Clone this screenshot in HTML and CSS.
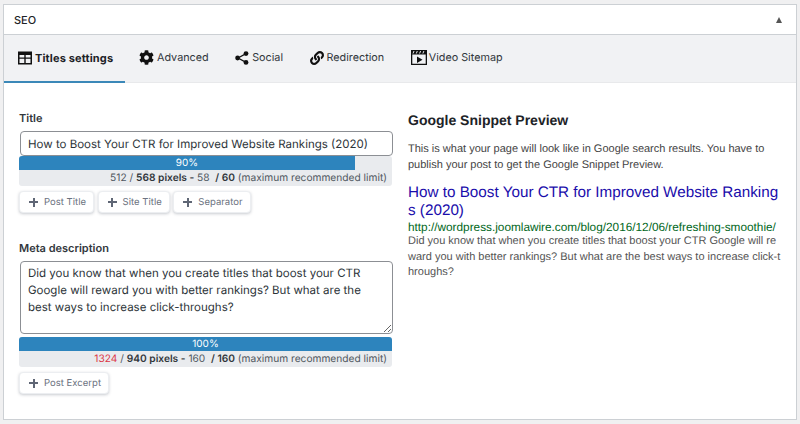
FILE: index.html
```html
<!DOCTYPE html>
<html lang="en">
<head>
<meta charset="utf-8">
<title>SEO</title>
<link rel="stylesheet" href="styles.css">
</head>
<body>
<section class="panel">
  <header class="panel-head">
    <h2 class="panel-title">SEO</h2>
    <span class="caret"></span>
  </header>
  <nav class="tabs">
    <a class="tab tab-active">
      <svg class="icon" viewBox="0 0 14 13"><path fill-rule="evenodd" d="M0 0h14v13H0zM1.500 3.500v2.500h4.800V3.500zM7.700 3.500v2.500h4.800V3.500zM1.500 7.300v4.200h4.800V7.300zM7.700 7.300v4.200h4.800V7.300z"/></svg>
      Titles settings
    </a>
    <a class="tab">
      <svg class="icon icon-gear" viewBox="0 0 512 512"><path d="M487.400 315.700l-42.600-24.600c4.300-23.200 4.300-47 0-70.200l42.600-24.600c4.900-2.800 7.100-8.600 5.500-14-11.100-35.600-30-67.800-54.700-94.600-3.800-4.100-10-5.100-14.800-2.300L380.800 110c-17.900-15.400-38.500-27.300-60.800-35.100V25.800c0-5.600-3.900-10.500-9.400-11.700-36.700-8.200-74.300-7.800-109.200 0-5.500 1.200-9.400 6.100-9.400 11.700V75c-22.200 7.900-42.800 19.800-60.800 35.100L88.700 85.500c-4.900-2.800-11-1.900-14.800 2.300-24.700 26.700-43.600 58.900-54.700 94.600-1.700 5.400.6 11.200 5.500 14L67.300 221c-4.300 23.200-4.300 47 0 70.200l-42.600 24.600c-4.900 2.800-7.100 8.600-5.500 14 11.100 35.600 30 67.800 54.700 94.600 3.800 4.100 10 5.100 14.800 2.300l42.600-24.600c17.900 15.400 38.500 27.300 60.800 35.100v49.200c0 5.600 3.900 10.500 9.400 11.700 36.700 8.200 74.300 7.800 109.200 0 5.500-1.200 9.400-6.100 9.400-11.700v-49.200c22.200-7.900 42.800-19.800 60.800-35.100l42.600 24.600c4.900 2.800 11 1.900 14.800-2.300 24.700-26.700 43.600-58.900 54.700-94.600 1.500-5.500-.7-11.300-5.600-14.100zM256 336c-44.100 0-80-35.900-80-80s35.900-80 80-80 80 35.900 80 80-35.900 80-80 80z"/></svg>
      Advanced
    </a>
    <a class="tab">
      <svg class="icon" viewBox="0 0 14 14"><circle cx="11" cy="2.600" r="2.400"/><circle cx="11" cy="11.400" r="2.400"/><circle cx="2.600" cy="7" r="2.400"/><path d="M3 7l8-4.400M3 7l8 4.400" stroke="#111" stroke-width="1.200" fill="none"/></svg>
      Social
    </a>
    <a class="tab">
      <svg class="icon" viewBox="0 0 512 512"><path d="M326.612 185.391c59.747 59.809 58.927 155.698.36 214.590-.11.12-.24.25-.36.37l-67.200 67.200c-59.270 59.270-155.699 59.262-214.960 0-59.270-59.260-59.270-155.700 0-214.960l37.106-37.106c9.840-9.840 26.786-3.300 27.294 10.606.648 17.722 3.826 35.527 9.690 52.721 1.986 5.822.567 12.262-3.783 16.612l-13.087 13.087c-28.026 28.026-28.905 73.660-1.155 101.960 28.024 28.579 74.086 28.749 102.325.51l67.200-67.190c28.191-28.191 28.073-73.757 0-101.830-3.701-3.694-7.429-6.564-10.341-8.569a16.037 16.037 0 0 1-6.947-12.606c-.396-10.567 3.348-21.456 11.698-29.806l21.054-21.055c5.521-5.521 14.182-6.199 20.584-1.731a152.482 152.482 0 0 1 20.522 17.197zM467.547 44.449c-59.261-59.262-155.690-59.270-214.960 0l-67.200 67.200c-.12.12-.25.25-.36.37-58.566 58.892-59.387 154.781.36 214.590a152.454 152.454 0 0 0 20.521 17.196c6.402 4.468 15.064 3.789 20.584-1.731l21.054-21.055c8.350-8.350 12.094-19.239 11.698-29.806a16.037 16.037 0 0 0-6.947-12.606c-2.912-2.005-6.640-4.875-10.341-8.569-28.073-28.073-28.191-73.639 0-101.830l67.200-67.190c28.239-28.239 74.300-28.069 102.325.51 27.750 28.300 26.872 73.934-1.155 101.960l-13.087 13.087c-4.350 4.350-5.769 10.790-3.783 16.612 5.864 17.194 9.042 34.999 9.690 52.721.509 13.906 17.454 20.446 27.294 10.606l37.106-37.106c59.271-59.259 59.271-155.699.001-214.959z"/></svg>
      Redirection
    </a>
    <a class="tab">
      <svg class="icon icon-video" viewBox="0 0 16 15"><path fill-rule="evenodd" d="M0 0h16v15H0zM1.300 4.500v9.200h13.400V4.500z"/><path d="M6 6.500l5.500 3.200L6 12.900z"/><path d="M3 1l-1 2.500M6.300 1l-1 2.500M9.600 1l-1 2.500M12.900 1l-1 2.500" stroke="#fff" stroke-width=".9"/></svg>
      Video Sitemap
    </a>
  </nav>
  <div class="panel-body">
    <div class="col-form">
      <label class="field-label">Title</label>
      <input class="text-input" type="text" value="How to Boost Your CTR for Improved Website Rankings (2020)">
      <div class="meter"><div class="meter-fill fill-90">90%</div></div>
      <div class="counter">512 / <b>568 pixels -</b> 58 &nbsp;<b>/ 60</b> (maximum recommended limit)</div>
      <div class="tags">
        <button class="tag" type="button"><span class="plus"></span>Post Title</button>
        <button class="tag" type="button"><span class="plus"></span>Site Title</button>
        <button class="tag" type="button"><span class="plus"></span>Separator</button>
      </div>
      <label class="field-label label-meta">Meta description</label>
      <textarea class="text-area">Did you know that when you create titles that boost your CTR Google will reward you with better rankings? But what are the best ways to increase click-throughs?</textarea>
      <div class="meter"><div class="meter-fill fill-100">100%</div></div>
      <div class="counter"><span class="over">1324</span> / <b>940 pixels -</b> 160 &nbsp;<b>/ 160</b> (maximum recommended limit)</div>
      <div class="tags">
        <button class="tag" type="button"><span class="plus"></span>Post Excerpt</button>
      </div>
    </div>
    <div class="col-preview">
      <h3 class="preview-title">Google Snippet Preview</h3>
      <p class="preview-note">This is what your page will look like in Google search results. You have to publish your post to get the Google Snippet Preview.</p>
      <a class="serp-title">How to Boost Your CTR for Improved Website Rankings (2020)</a>
      <div class="serp-url">http://wordpress.joomlawire.com/blog/2016/12/06/refreshing-smoothie/</div>
      <p class="serp-desc">Did you know that when you create titles that boost your CTR Google will reward you with better rankings? But what are the best ways to increase click-throughs?</p>
    </div>
  </div>
</section>
</body>
</html>
```
FILE: styles.css
```css
* { box-sizing: border-box; }
html, body { margin: 0; height: 100%; }
body {
  background: #f0f0f1;
  padding: 4px 3px;
  font-family: Inter, "Liberation Sans", sans-serif;
  color: #3c434a;
  overflow: hidden;
  text-rendering: geometricPrecision;
}
.panel {
  height: 416px;
  background: #fff;
  border: 1px solid #ccd0d4;
}
.panel-head {
  height: 30px;
  display: flex;
  align-items: center;
  justify-content: space-between;
  padding: 0 11px 0 10px;
  border-bottom: 1px solid #ccd0d4;
}
.panel-title {
  margin: 0;
  font-size: 11px;
  font-weight: 500;
  color: #1d2327;
}
.caret {
  width: 0;
  height: 0;
  border-left: 3.500px solid transparent;
  border-right: 3.500px solid transparent;
  border-bottom: 6px solid #555;
  margin-right: 3px;
}
.tabs {
  height: 48px;
  display: flex;
  background: #f1f2f4;
  border-bottom: 1px solid #e8e9eb;
}
.tab {
  display: flex;
  align-items: center;
  gap: 3px;
  height: 48px;
  padding: 0 12.500px 3px 14px;
  font-size: 10.800px;
  color: #32373c;
  white-space: nowrap;
}
.tab-active {
  font-size: 11px;
  font-weight: 700;
  letter-spacing: .15px;
  color: #1d2327;
  border-bottom: 2px solid #3b88b8;
  padding-bottom: 1px;
  width: 121px;
}
.icon { width: 14px; height: 14px; flex: none; fill: #111; }
.icon-gear { width: 15px; height: 15px; }
.icon-video { width: 16px; height: 15px; margin-right: -1px; }
.panel-body {
  display: flex;
  padding: 28px 0 0 15px;
  gap: 16px;
}
.col-form { width: 373px; flex: none; }
.col-preview { width: 373.500px; flex: none; }
.field-label {
  display: block;
  font-size: 11px;
  font-weight: 600;
  line-height: 14px;
  color: #32373c;
  margin-bottom: 6px;
}
.label-meta { margin-top: 28px; }
.text-input, .text-area {
  display: block;
  width: 100%;
  border: 1px solid #8c8f94;
  border-radius: 4px;
  background: #fff;
  font-family: inherit;
  font-size: 11.500px;
  color: #2c3338;
  padding: 0 7px;
  margin: 0 0 0 1px;
  text-rendering: geometricPrecision;
}
.text-input { height: 25px; }
.text-area { height: 73px; line-height: 17px; padding: 3px 7px; margin-bottom: 3px; }
.meter {
  height: 14px;
  background: #e9ebee;
  border-radius: 3px 3px 0 0;
}
.meter-fill {
  height: 14px;
  background: #2d84bd;
  color: #fff;
  text-align: center;
  font-size: 10px;
  line-height: 14px;
  border-radius: 3px 0 0 0;
}
.fill-90 { width: 336px; }
.fill-100 { width: 100%; border-radius: 3px 3px 0 0; }
.counter {
  height: 16px;
  background: #e9ebee;
  border-radius: 0 0 3px 3px;
  font-size: 10.200px;
  line-height: 16px;
  text-align: right;
  padding-right: 5px;
  white-space: nowrap;
  color: #50575e;
}
.counter b { color: #32373c; font-weight: 600; }
.over { color: #dc3545; }
.tags { display: flex; gap: 3.500px; margin-top: 5px; }
.tag {
  display: flex;
  align-items: center;
  height: 22px;
  padding: 0 7px 0 9px;
  background: #fff;
  border: 1px solid #eceef1;
  border-radius: 4px;
  box-shadow: 0 1px 3px rgba(40, 50, 70, .25);
  font-family: inherit;
  font-size: 9.500px;
  letter-spacing: .02px;
  color: #6b7280;
  text-rendering: geometricPrecision;
}
.plus {
  width: 9px;
  height: 9px;
  margin-right: 6px;
  background:
    linear-gradient(#5f6675, #5f6675) center / 9px 2px no-repeat,
    linear-gradient(#5f6675, #5f6675) center / 2px 9px no-repeat;
}
.preview-title {
  margin: 0;
  font-family: "Liberation Sans", Arial, sans-serif;
  font-size: 14px;
  font-weight: 700;
  line-height: 16px;
  color: #1d2327;
  padding-top: 1px;
}
.preview-note {
  margin: 13px 0 0;
  font-family: "Liberation Sans", Arial, sans-serif;
  font-size: 11px;
  line-height: 16px;
  color: #444;
}
.serp-title {
  display: block;
  margin-top: 11px;
  font-family: "Liberation Sans", Arial, sans-serif;
  font-size: 15.250px;
  line-height: 18px;
  color: #1a0dab;
  word-break: break-all;
}
.serp-url {
  font-family: "Liberation Sans", Arial, sans-serif;
  font-size: 11.800px;
  line-height: 14px;
  color: #006621;
  white-space: nowrap;
}
.serp-desc {
  margin: 0;
  font-family: "Liberation Sans", Arial, sans-serif;
  font-size: 11px;
  line-height: 15.500px;
  color: #545454;
  word-break: break-all;
}
```
